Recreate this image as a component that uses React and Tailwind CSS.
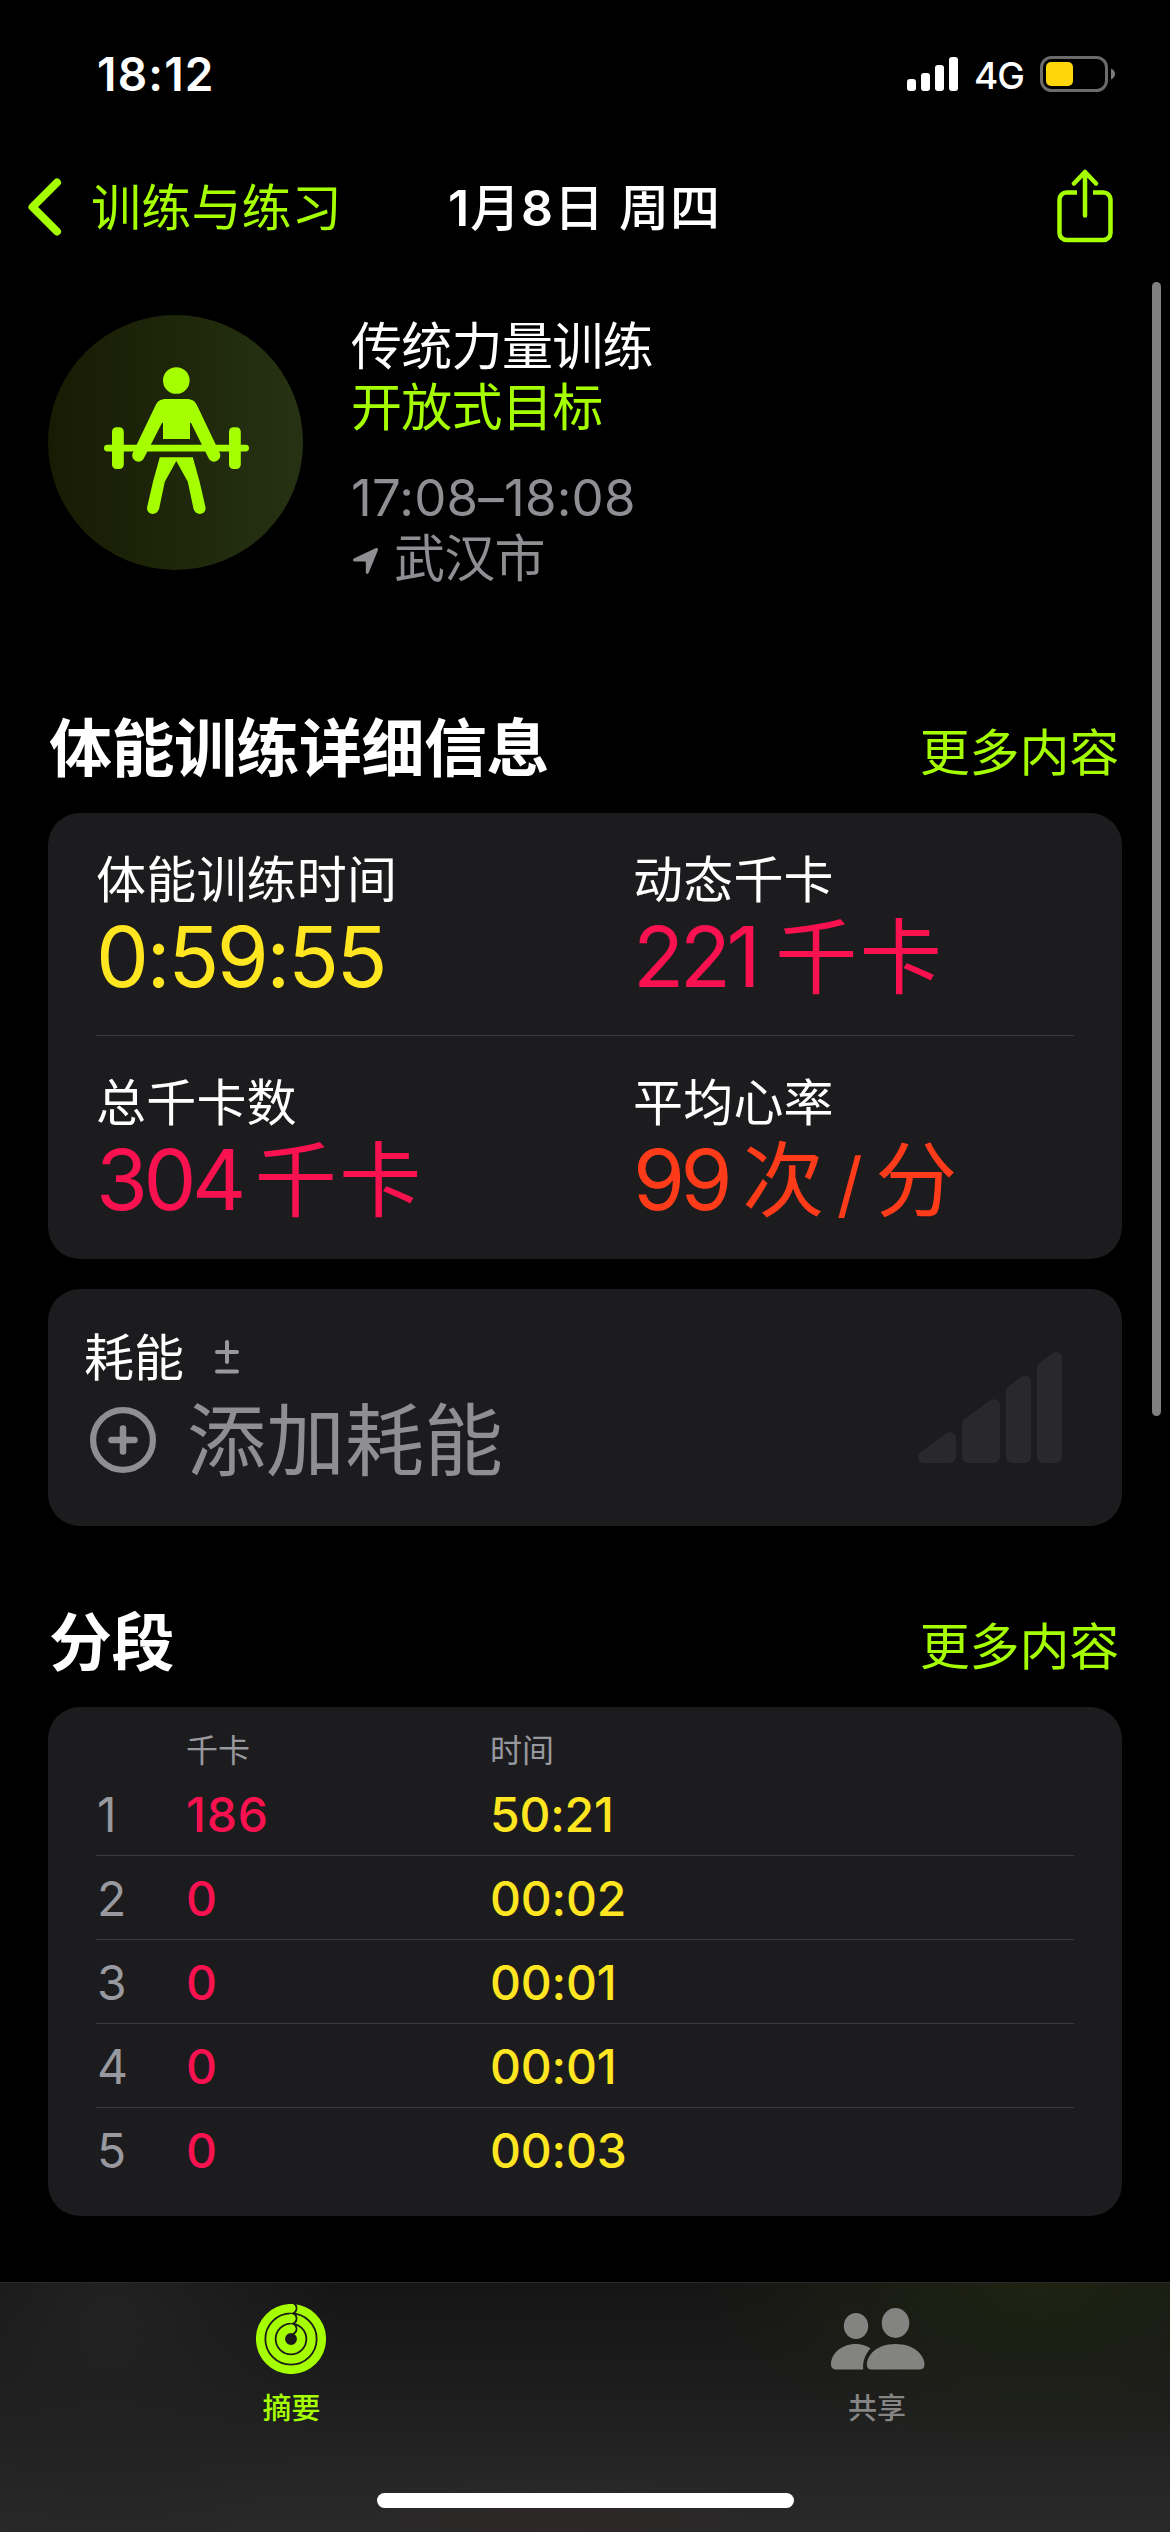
import React from "react";

const splits = [
  { id: 1, kcal: "186", time: "50:21" },
  { id: 2, kcal: "0", time: "00:02" },
  { id: 3, kcal: "0", time: "00:01" },
  { id: 4, kcal: "0", time: "00:01" },
  { id: 5, kcal: "0", time: "00:03" },
];

function StatusBar() {
  return (
    <div className="flex h-[148px] items-center justify-between pl-[97px] pr-[54px]">
      <span className="text-[46px] font-semibold leading-none tracking-[1.2px]">18:12</span>
      <div className="flex items-center">
        <svg width="52" height="34" viewBox="0 0 52 34" fill="#fff">
          <rect x="0" y="22" width="9" height="12" rx="3" />
          <rect x="14" y="16" width="9" height="18" rx="3" />
          <rect x="28" y="8" width="9" height="26" rx="3" />
          <rect x="42" y="0" width="9" height="34" rx="3" />
        </svg>
        <span className="ml-[15px] w-[51px] pt-[3px] text-[37px] font-medium leading-none tracking-[-1px]">4G</span>
        <svg className="ml-[15px]" width="76" height="36" viewBox="0 0 76 36">
          <rect x="1.5" y="1.5" width="65" height="33" rx="10" fill="none" stroke="#6b6b6b" strokeWidth="3" />
          <rect x="6" y="6" width="27" height="24" rx="5" fill="#ffd60a" />
          <path d="M71 12.500c2.500 1 4 3 4 5.500s-1.500 4.500-4 5.500z" fill="#7a7a7a" />
        </svg>
      </div>
    </div>
  );
}

function NavBar() {
  return (
    <div className="grid h-[118px] grid-cols-[1fr_auto_1fr] items-center pl-[27px] pr-[55px]">
      <div className="flex items-center text-[#a6ff00]">
        <svg width="36" height="60" viewBox="0 0 36 60" fill="none" stroke="currentColor" strokeWidth="8" strokeLinecap="round" strokeLinejoin="round">
          <path d="M30 5.500 5.500 30 30 54.500" />
        </svg>
        <span className="ml-[28px] pt-[2px] text-[50px] leading-[60px] tracking-[0.2px]">训练与练习</span>
      </div>
      <h1 className="ml-[27px] whitespace-nowrap pt-[1px] text-[50px] font-medium leading-[60px] tracking-[0.9px]">
        <span className="font-semibold">1</span>月<span className="font-semibold">8</span>日 周四
      </h1>
      <svg className="-mt-[3px] justify-self-end" width="60" height="74" viewBox="0 0 60 74" fill="none" stroke="#a6ff00" strokeWidth="4.500" strokeLinecap="round" strokeLinejoin="round">
        <path strokeLinecap="butt" d="M22 23.500H11.500a7 7 0 0 0-7 7V64a7 7 0 0 0 7 7h37a7 7 0 0 0 7-7V30.500a7 7 0 0 0-7-7H38" />
        <path d="M30 46.500V3M19 14.500 30 3l11 11.500" />
      </svg>
    </div>
  );
}

function LifterIcon() {
  return (
    <svg width="255" height="255" viewBox="0 0 255 255" fill="#a6ff00">
      <circle cx="128.300" cy="65.500" r="13.300" />
      <path d="M118 84h20.600c5.400 0 9 2.400 11 7.400L172 138.500c2 7.500-8 11.500-11.500 4.500L142.800 107.500 142 108v16h-27v-16l-.8-.5L96 143c-3.500 7-13.500 3-11.500-4.500L107 91.400c2-5 5.600-7.400 11-7.400z" />
      <rect x="56" y="129.700" width="145" height="6.800" rx="3.400" />
      <rect x="64" y="112.300" width="11.800" height="41.700" rx="4.500" />
      <rect x="181" y="112.300" width="11.800" height="41.700" rx="4.500" />
      <path d="M111.800 142.300h33l6.700 24 6 26c1 7.500-9.500 9.500-12 1.500l-5.700-27-11.500-20.800-11.500 20.800-5.700 27c-2.500 8-13 6-12-1.500l6-26z" />
    </svg>
  );
}

function WorkoutHeader() {
  return (
    <div className="mt-[49px] flex items-start px-12">
      <div className="size-[255px] shrink-0 rounded-full bg-linear-to-r from-[#171b03] to-[#263213]">
        <LifterIcon />
      </div>
      <div className="ml-12 h-[275px] pt-[1px] text-[51px] leading-[61px] tracking-[-0.7px]">
        <p>传统力量训练</p>
        <p className="text-[#a6ff00]">开放式目标</p>
        <p className="mt-[29px] tracking-[0.2px] text-[#8e8e93]">17:08–18:08</p>
        <p className="flex items-center text-[#8e8e93]">
          <svg className="ml-[2px] mt-[4px]" width="26" height="28" viewBox="0 0 26 28" fill="currentColor">
            <path d="M22.500 1.200c1.600-.8 3 .5 2.300 2.200L15.800 25.500c-.8 2-3 1.800-3-.3V15.500c0-.7-.3-1-1-1H1.800c-2.200 0-2.400-2.300-.5-3.200z" />
          </svg>
          <span className="ml-[15px]">武汉市</span>
        </p>
      </div>
    </div>
  );
}

function SectionTitle({ title }) {
  return (
    <div className="flex h-[105px] items-start justify-between pl-[49px] pr-[51px] pt-[1px]">
      <h2 className="text-[63px] font-bold leading-[79px] tracking-[-0.5px]">{title}</h2>
      <a className="pt-[5px] text-[50px] leading-[79px] tracking-[-0.2px] text-[#a6ff00]">更多内容</a>
    </div>
  );
}

function Metric({ label, value, unit, color, tracking = "tracking-[-4.5px]", gap = "ml-[13px]" }) {
  return (
    <div className="pt-[38px]">
      <p className="text-[50px] leading-[58px] tracking-[0.2px]">{label}</p>
      <p className={`flex whitespace-nowrap text-[84px] leading-[96px] ${color}`}>
        <span className={tracking}>{value}</span>
        {unit && <span className={`pt-[1px] text-[82px] tracking-[2.5px] ${gap}`}>{unit}</span>}
      </p>
    </div>
  );
}

function DetailsCard() {
  return (
    <div className="mx-12 h-[446px] rounded-[32px] bg-[#1c1c1e] px-12">
      <div className="grid h-[223px] grid-cols-[537px_1fr] border-b border-[#3a3a3d]">
        <Metric label="体能训练时间" value="0:59:55" color="text-[#ffe620]" tracking="tracking-[-2.5px]" />
        <Metric label="动态千卡" value="221" unit="千卡" color="text-[#fa114f]" tracking="tracking-[-4.5px]" gap="ml-[19px]" />
      </div>
      <div className="grid h-[223px] grid-cols-[537px_1fr]">
        <Metric label="总千卡数" value="304" unit="千卡" color="text-[#fa114f]" />
        <Metric
          label="平均心率"
          value="99"
          unit={<>次<span className="ml-[10px] mr-[10px] text-[72px]">/</span>分</>}
          color="text-[#ff3b1a]"
          tracking="tracking-[-4.5px]"
          gap="ml-[14px]"
        />
      </div>
    </div>
  );
}

function EffortCard() {
  return (
    <div className="mx-12 mt-[30px] flex h-[237px] justify-between rounded-[32px] bg-[#1c1c1e] pl-9 pr-[60px] pt-[38px]">
      <div>
        <div className="flex h-[60px] items-center">
          <span className="pt-[2px] text-[50px] leading-[60px]">耗能</span>
          <svg className="ml-[31px]" width="24" height="34" viewBox="0 0 24 34" fill="none" stroke="#98989f" strokeWidth="4" strokeLinecap="round">
            <path d="M12 2v20M2 12h20M2 31.500h20" />
          </svg>
        </div>
        <div className="flex h-[106px] items-center text-[#8e8e93]">
          <svg className="ml-[6px]" width="66" height="66" viewBox="0 0 66 66" fill="none" stroke="currentColor" strokeLinecap="round">
            <circle cx="33" cy="33" r="29.900" strokeWidth="6.200" />
            <path d="M33 21.500v23M21.500 33h23" strokeWidth="6.500" />
          </svg>
          <span className="ml-[31px] pt-[2px] text-[79px] leading-[96px]">添加耗能</span>
        </div>
      </div>
      <svg className="mt-[25px]" width="144" height="111" viewBox="0 0 144 111" fill="#29292b">
        <path d="M6 111c-6 0-8-7-3.500-10.500L28 81.500c5-3 10 0 10 5V105a6 6 0 0 1-6 6z" />
        <path d="M44 72c0-2 .8-3.600 2.500-4.900L72 48.500c5-3 10 0 10 5V105a6 6 0 0 1-6 6H50a6 6 0 0 1-6-6z" />
        <path d="M88 39.500c0-2 .8-3.600 2.500-4.900L103 25c5-3 10 0 10 5v75a6 6 0 0 1-6 6H94a6 6 0 0 1-6-6z" />
        <path d="M119 16c0-2 .8-3.600 2.500-4.900L134 1.500c5-3 10 0 10 5V105a6 6 0 0 1-6 6h-13a6 6 0 0 1-6-6z" />
      </svg>
    </div>
  );
}

function SplitsCard() {
  return (
    <div className="mx-12 h-[509px] rounded-[32px] bg-[#1c1c1e] px-12 pt-[22px]">
      <div className="grid h-[43px] grid-cols-[90px_304px_1fr] pt-[1px] text-[32px] leading-[42px] text-[#98989f]">
        <span className="col-start-2">千卡</span>
        <span>时间</span>
      </div>
      {splits.map((s) => (
        <div
          key={s.id}
          className="grid h-[84px] grid-cols-[90px_304px_1fr] items-center border-b border-[#3a3a3d] pt-[2px] text-[48px] leading-none last:border-transparent"
        >
          <span className="pl-[1px] text-[#98989f]">{s.id}</span>
          <span className="font-medium tracking-[0.8px] text-[#fa114f]">{s.kcal}</span>
          <span className="font-medium tracking-[-0.2px] text-[#ffe620]">{s.time}</span>
        </div>
      ))}
    </div>
  );
}

function RingsIcon() {
  return (
    <svg className="-ml-[3px]" width="70" height="70" viewBox="0 0 70 70" fill="none">
      <g stroke="#a6ff00" strokeWidth="8.500">
        <circle cx="35" cy="35" r="30.800" />
        <circle cx="35" cy="35" r="20.500" />
        <circle cx="35" cy="35" r="10.200" />
      </g>
      {/* rounded ring ends overlapping the ring start */}
      {[4.2, 14.5, 24.8].map((y) => (
        <g key={y}>
          <path d={`M37 ${y - 5.1}a5.500 5.500 0 0 1 0 10.200`} stroke="#191919" strokeWidth="2" />
          <circle cx="35.200" cy={y} r="4.250" fill="#a6ff00" />
        </g>
      ))}
    </svg>
  );
}

function PeopleIcon() {
  return (
    <svg width="94" height="70" viewBox="0 0 94 70" fill="#838382">
      <ellipse cx="25" cy="22" rx="12.200" ry="13" />
      <ellipse cx="64.500" cy="19" rx="13.800" ry="15" />
      <path d="M25 40c5.500 0 10.500 1.600 14.500 4.300C34 50.500 31.500 58 32.200 65.500H5.500C2 65.500 0 63.500 0 60.500 0 50 10 40 25 40z" />
      <path d="M64.500 40C83 40 93.500 51 93.500 60.800c0 3-2 4.700-5 4.700h-48c-3 0-4.700-1.800-4.700-4.700C35.800 51 46 40 64.500 40z" />
    </svg>
  );
}

function TabBar() {
  return (
    <div className="mt-[66px] flex h-[250px] flex-col border-t border-[#2a2a2a] bg-[radial-gradient(ellipse_340px_170px_at_1040px_0px,#1e2312_0%,transparent_100%),radial-gradient(ellipse_230px_260px_at_110px_40px,#212221_0%,transparent_100%),radial-gradient(ellipse_240px_70px_at_560px_250px,#2e2828_0%,transparent_100%),linear-gradient(to_bottom,#151515,#1c1c1c_40%,#262626_80%,#292929)]">
      <div className="flex">
        <div className="flex flex-1 flex-col items-center pt-[21px] text-[#a6ff00]">
          <RingsIcon />
          <span className="mt-[15px] pr-[2px] text-[29px] font-medium leading-[40px]">摘要</span>
        </div>
        <div className="flex flex-1 flex-col items-center pt-[21px] text-[#868686]">
          <PeopleIcon />
          <span className="mt-[15px] pr-[1px] text-[29px] font-medium leading-[40px]">共享</span>
        </div>
      </div>
      <div className="mx-auto mt-[64px] h-[15px] w-[417px] rounded-full bg-white" />
    </div>
  );
}

export default function App() {
  return (
    <div className="relative flex h-[2532px] w-[1170px] flex-col overflow-hidden bg-black font-['Inter','Noto_Sans_CJK_SC',sans-serif] text-white">
      <StatusBar />
      <NavBar />
      <WorkoutHeader />
      <div className="mt-[118px]">
        <SectionTitle title="体能训练详细信息" />
        <DetailsCard />
        <EffortCard />
      </div>
      <div className="mt-[76px]">
        <SectionTitle title="分段" />
        <SplitsCard />
      </div>
      <TabBar />
      {/* scroll indicator */}
      <div className="absolute right-[9px] top-[282px] h-[1134px] w-[9px] rounded-full bg-[#808080]" />
    </div>
  );
}
